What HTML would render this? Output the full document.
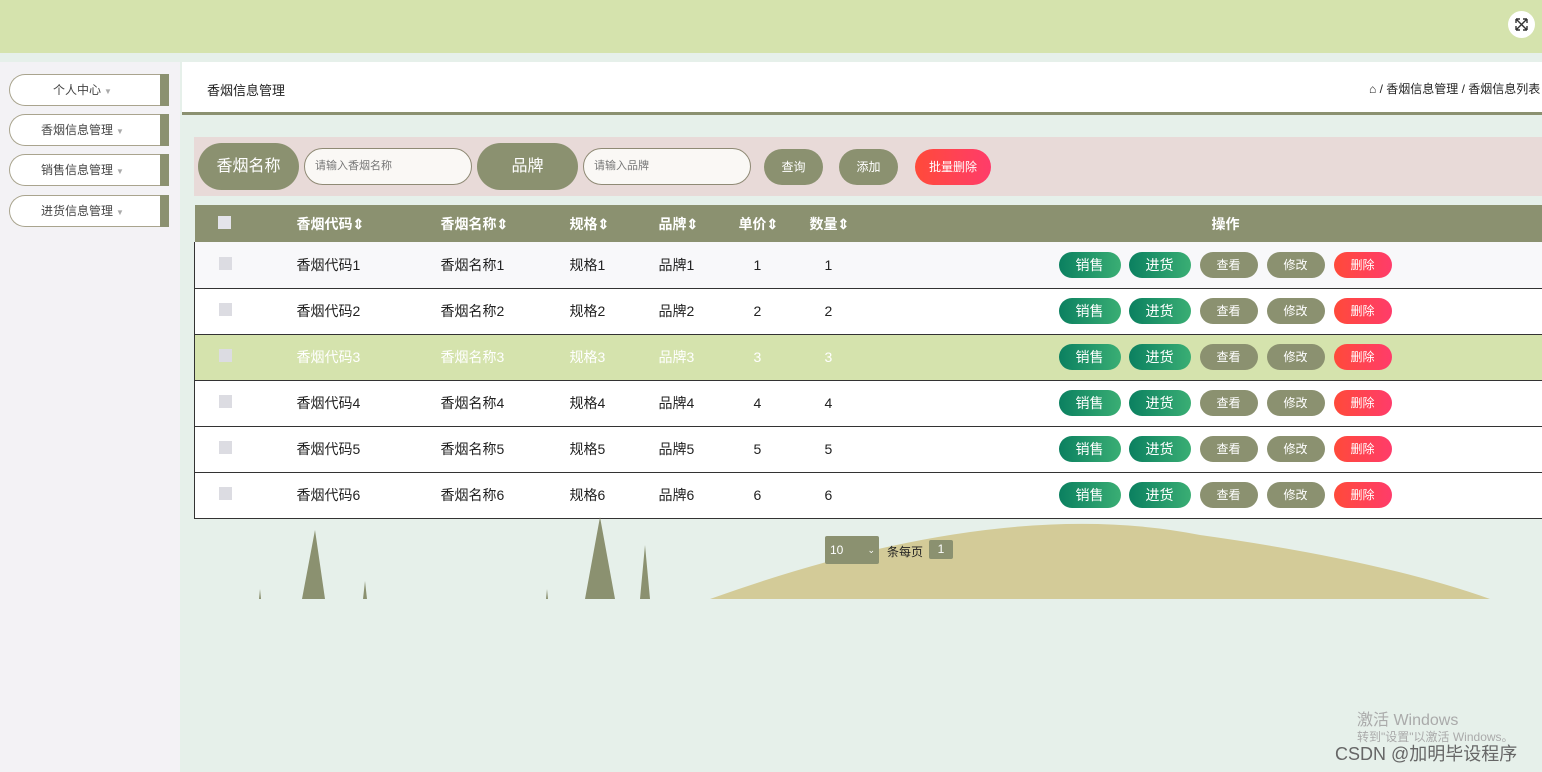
<!DOCTYPE html>
<html><head><meta charset="utf-8"><style>
*{margin:0;padding:0;box-sizing:border-box}
body{width:1542px;height:772px;overflow:hidden;background:#e6f0ea;font-family:"Liberation Sans","Noto Sans CJK SC",sans-serif;font-size:13px;color:#222;position:relative}
.a{position:absolute}
.top{left:0;top:0;width:1542px;height:53px;background:#d5e3ad}
.side{left:0;top:62px;width:180px;height:710px;background:#f3f2f5}
.mi{position:absolute;left:9px;width:160px;height:32px;border:1px solid #a9a48e;border-right:none;border-radius:16px 0 0 16px;background:#fff;font-size:12px;color:#444;text-align:center;line-height:30px;padding-right:14px}
.mi:after{content:"";position:absolute;right:0;top:-1px;width:9px;height:32px;background:#8b9170}
.mi i{font-style:normal;color:#aaa;font-size:8px;margin-left:3px}
.hdr{left:182px;top:62px;width:1360px;height:53px;background:#fff;border-bottom:3px solid #8b9170}
.srch{left:194px;top:137px;width:1348px;height:59px;background:#e8dad8}
.lab{position:absolute;top:6px;height:47px;border-radius:24px;background:#8b9170;color:#fff;font-size:16px;text-align:center;line-height:47px}
.inp{position:absolute;top:11px;height:37px;border:1px solid #8f8a75;border-radius:19px;background:#faf8f5;color:#777;font-size:11px;line-height:35px;padding-left:10px}
.btn{position:absolute;top:12px;height:36px;border-radius:18px;background:#8b9170;color:#fff;font-size:12px;text-align:center;line-height:36px}
table{position:absolute;left:194px;top:205px;width:1348px;border-collapse:collapse;font-size:14px}
th{background:#8b9170;color:#fff;height:37px;font-weight:bold;text-align:left}
td{height:46px;border-bottom:1px solid #333;background:#fff}
tr.r1 td{background:#f8f8fa}
tr.r3 td{background:#d5e3ad;color:#fff}
tbody tr td:first-child{border-left:1px solid #333}
.cb{display:inline-block;width:13px;height:13px;background:#dcdce2;margin-left:24px}
.ops{position:relative;height:26px;margin-left:89px}
.ob{position:absolute;top:0;height:26px;border-radius:13px;color:#fff;text-align:center;line-height:26px;font-size:14px}
.g{background:linear-gradient(90deg,#0b8060,#3aae74)}
.o{background:#8b9170;font-size:12px}
.rd{background:linear-gradient(90deg,#ff4a3a,#ff3c6a);font-size:12px}
</style></head><body>
<div class="a top"></div>
<div class="a" style="right:7px;top:11px;width:27px;height:27px;border-radius:50%;background:#fff">
<svg width="27" height="27" viewBox="0 0 27 27" stroke="#333" stroke-width="1.4" fill="none"><path d="M8 8l11 11M19 8L8 19M8 8h4M8 8v4M19 8h-4M19 8v4M8 19h4M8 19v-4M19 19h-4M19 19v-4"/></svg></div>
<div class="a side">
<div class="mi" style="top:12px">个人中心<i>▼</i></div>
<div class="mi" style="top:52px">香烟信息管理<i>▼</i></div>
<div class="mi" style="top:92px">销售信息管理<i>▼</i></div>
<div class="mi" style="top:133px">进货信息管理<i>▼</i></div>
</div>
<div class="a hdr"><span class="a" style="left:25px;top:18px;font-size:13px">香烟信息管理</span>
<span class="a" style="left:1187px;top:18px;font-size:12px;white-space:nowrap">⌂ / 香烟信息管理 / 香烟信息列表</span></div>
<div class="a srch">
<div class="lab" style="left:4px;width:101px">香烟名称</div>
<div class="inp" style="left:110px;width:168px">请输入香烟名称</div>
<div class="lab" style="left:283px;width:101px">品牌</div>
<div class="inp" style="left:389px;width:168px">请输入品牌</div>
<div class="btn" style="left:570px;width:59px">查询</div>
<div class="btn" style="left:645px;width:59px">添加</div>
<div class="btn" style="left:721px;width:76px;background:linear-gradient(90deg,#ff4a3a,#ff3c6a)">批量删除</div>
</div>
<table>
<thead><tr><th style="width:102px"><span class="cb" style="background:#e4e4ea;margin-left:23px"></span></th><th style="width:144px">香烟代码⇕</th><th style="width:129px">香烟名称⇕</th><th style="width:89px">规格⇕</th><th style="width:80px">品牌⇕</th><th style="width:71px">单价⇕</th><th style="width:160px">数量⇕</th><th style="text-align:left;padding-left:242px">操作</th></tr></thead>
<tbody>
<tr class="r1"><td><span class="cb"></span></td><td>香烟代码1</td><td>香烟名称1</td><td>规格1</td><td>品牌1</td><td style="padding-left:15px">1</td><td style="padding-left:15px">1</td><td><div class="ops"><div class="ob g" style="left:0;width:62px">销售</div><div class="ob g" style="left:70px;width:62px">进货</div><div class="ob o" style="left:141px;width:58px">查看</div><div class="ob o" style="left:208px;width:58px">修改</div><div class="ob rd" style="left:275px;width:58px">删除</div></div></td></tr>
<tr><td><span class="cb"></span></td><td>香烟代码2</td><td>香烟名称2</td><td>规格2</td><td>品牌2</td><td style="padding-left:15px">2</td><td style="padding-left:15px">2</td><td><div class="ops"><div class="ob g" style="left:0;width:62px">销售</div><div class="ob g" style="left:70px;width:62px">进货</div><div class="ob o" style="left:141px;width:58px">查看</div><div class="ob o" style="left:208px;width:58px">修改</div><div class="ob rd" style="left:275px;width:58px">删除</div></div></td></tr>
<tr class="r3"><td><span class="cb"></span></td><td>香烟代码3</td><td>香烟名称3</td><td>规格3</td><td>品牌3</td><td style="padding-left:15px">3</td><td style="padding-left:15px">3</td><td><div class="ops"><div class="ob g" style="left:0;width:62px">销售</div><div class="ob g" style="left:70px;width:62px">进货</div><div class="ob o" style="left:141px;width:58px">查看</div><div class="ob o" style="left:208px;width:58px">修改</div><div class="ob rd" style="left:275px;width:58px">删除</div></div></td></tr>
<tr><td><span class="cb"></span></td><td>香烟代码4</td><td>香烟名称4</td><td>规格4</td><td>品牌4</td><td style="padding-left:15px">4</td><td style="padding-left:15px">4</td><td><div class="ops"><div class="ob g" style="left:0;width:62px">销售</div><div class="ob g" style="left:70px;width:62px">进货</div><div class="ob o" style="left:141px;width:58px">查看</div><div class="ob o" style="left:208px;width:58px">修改</div><div class="ob rd" style="left:275px;width:58px">删除</div></div></td></tr>
<tr><td><span class="cb"></span></td><td>香烟代码5</td><td>香烟名称5</td><td>规格5</td><td>品牌5</td><td style="padding-left:15px">5</td><td style="padding-left:15px">5</td><td><div class="ops"><div class="ob g" style="left:0;width:62px">销售</div><div class="ob g" style="left:70px;width:62px">进货</div><div class="ob o" style="left:141px;width:58px">查看</div><div class="ob o" style="left:208px;width:58px">修改</div><div class="ob rd" style="left:275px;width:58px">删除</div></div></td></tr>
<tr><td><span class="cb"></span></td><td>香烟代码6</td><td>香烟名称6</td><td>规格6</td><td>品牌6</td><td style="padding-left:15px">6</td><td style="padding-left:15px">6</td><td><div class="ops"><div class="ob g" style="left:0;width:62px">销售</div><div class="ob g" style="left:70px;width:62px">进货</div><div class="ob o" style="left:141px;width:58px">查看</div><div class="ob o" style="left:208px;width:58px">修改</div><div class="ob rd" style="left:275px;width:58px">删除</div></div></td></tr>
</tbody></table>
<svg class="a" style="left:0;top:515px" width="1542" height="90">
<path d="M710 84 Q1000 -20 1200 20 Q1380 45 1490 84Z" fill="#d3cb98"/>
<path d="M302 84 L315 15 L325 84Z M585 84 L600 2 L615 84Z M640 84 L645 30 L650 84Z M259 84 L260 74 L261 84Z M363 84 L365 66 L367 84Z M546 84 L547 74 L548 84Z" fill="#8b9170"/>
</svg>
<div class="a" style="left:825px;top:536px;width:54px;height:28px;background:#8b9170;border-radius:2px;color:#fff;font-size:12px;line-height:28px;padding-left:5px">10<span style="position:absolute;right:4px;font-size:9px">⌄</span></div>
<div class="a" style="left:887px;top:543px;font-size:12px">条每页</div>
<div class="a" style="left:929px;top:540px;width:24px;height:19px;background:#8b9170;color:#fff;font-size:12px;text-align:center;line-height:19px;border-radius:2px">1</div>
<div class="a" style="left:1357px;top:706px;color:#aaa;font-size:16px">激活 Windows</div>
<div class="a" style="left:1357px;top:728px;color:#aaa;font-size:12px">转到"设置"以激活 Windows。</div>
<div class="a" style="left:1335px;top:740px;color:#666;font-size:18px">CSDN @加明毕设程序</div>
</body></html>
